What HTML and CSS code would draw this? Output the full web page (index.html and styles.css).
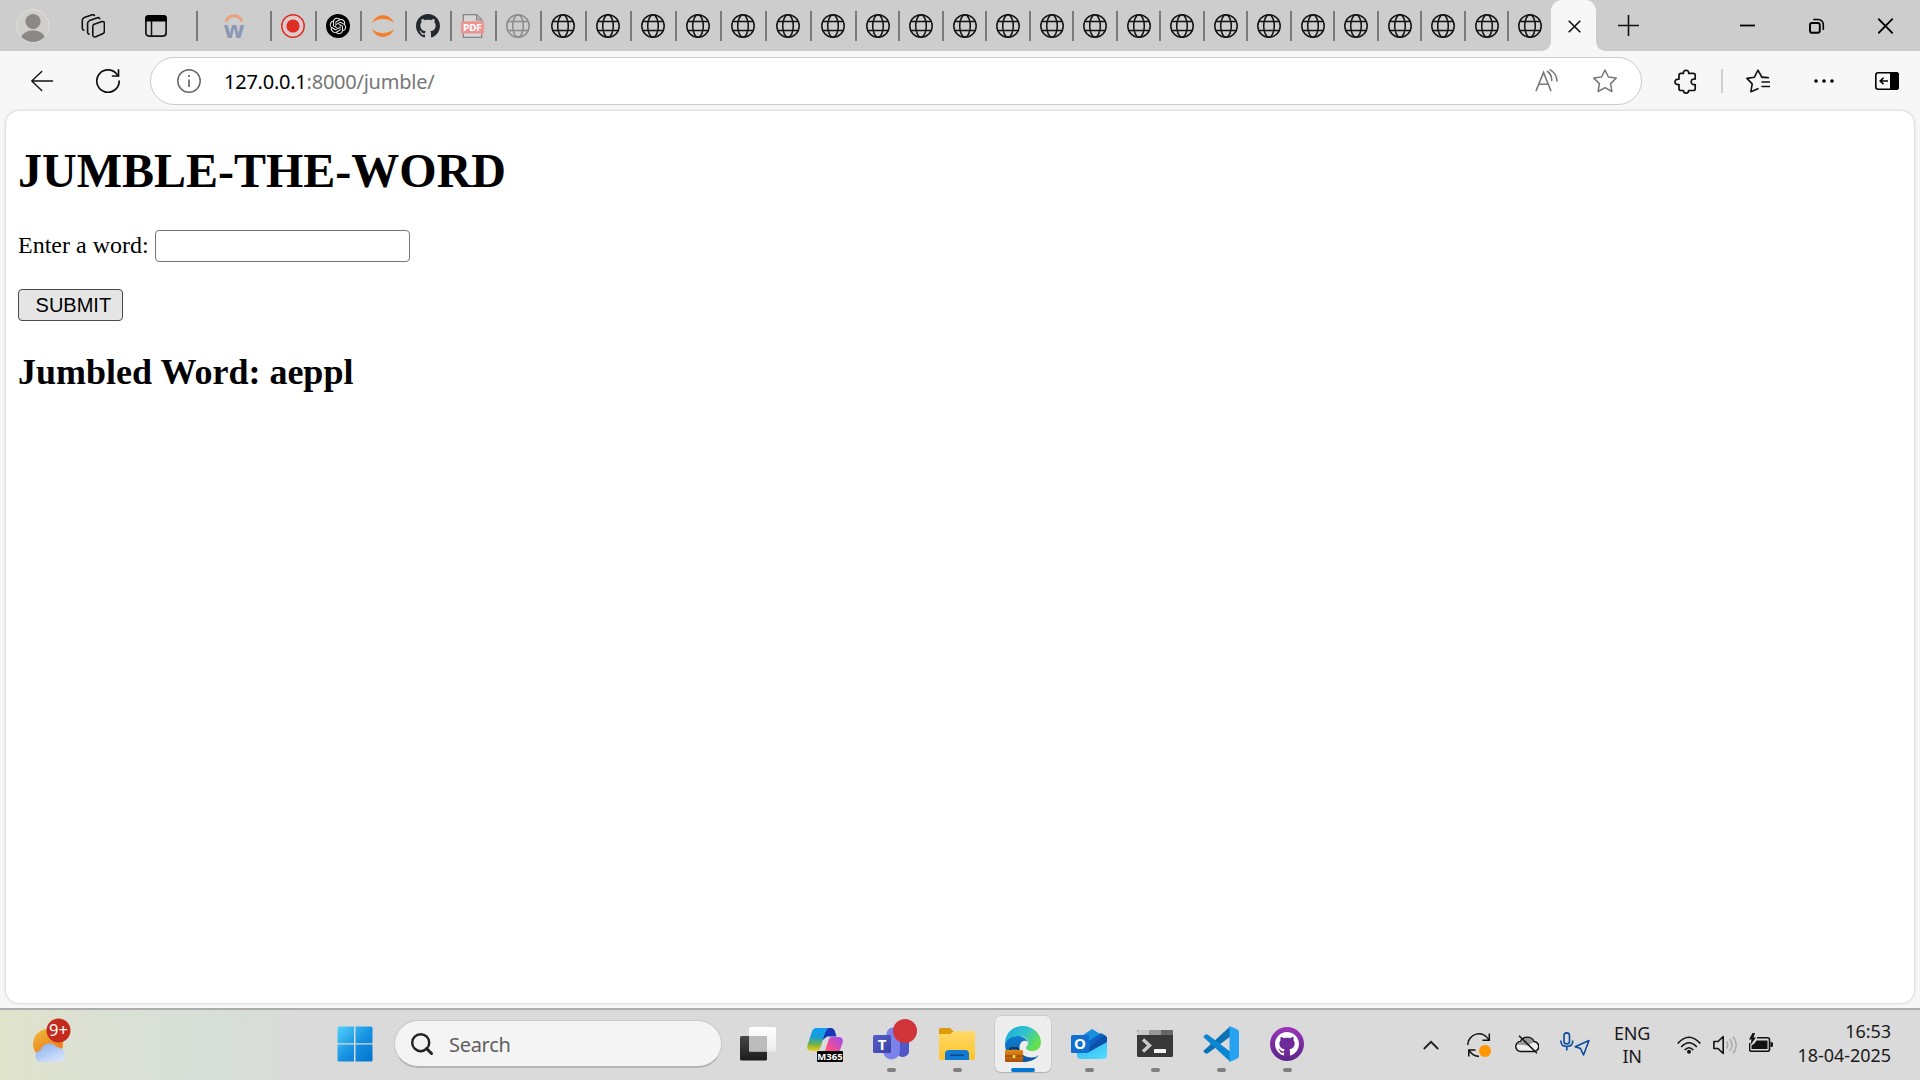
FILE: index.html
```html
<!DOCTYPE html>
<html lang="en">
<head>
<meta charset="utf-8">
<title>127.0.0.1:8000/jumble/</title>
<link rel="stylesheet" href="styles.css">
</head>
<body>
<svg class="defs" aria-hidden="true">
  <defs>
    <symbol id="globe" viewBox="0 0 24 24"><g fill="none" stroke="currentColor" stroke-width="1.5"><circle cx="12" cy="12" r="11.2"/><ellipse cx="12" cy="12" rx="5.3" ry="11.2"/><path d="M1.8 7.6h20.4M1.8 16.4h20.4"/></g></symbol>
    <symbol id="github" viewBox="0 0 16 16"><path fill="currentColor" d="M8 0C3.58 0 0 3.58 0 8c0 3.54 2.29 6.53 5.47 7.59.4.07.55-.17.55-.38 0-.19-.01-.82-.01-1.49-2.01.37-2.53-.49-2.69-.94-.09-.23-.48-.94-.82-1.13-.28-.15-.68-.52-.01-.53.63-.01 1.08.58 1.23.82.72 1.21 1.87.87 2.33.66.07-.52.28-.87.51-1.07-1.78-.2-3.64-.89-3.64-3.95 0-.87.31-1.59.82-2.15-.08-.2-.36-1.02.08-2.12 0 0 .67-.21 2.2.82.64-.18 1.32-.27 2-.27.68 0 1.36.09 2 .27 1.53-1.04 2.2-.82 2.2-.82.44 1.1.16 1.92.08 2.12.51.56.82 1.27.82 2.15 0 3.07-1.87 3.75-3.65 3.95.29.25.54.73.54 1.48 0 1.07-.01 1.93-.01 2.2 0 .21.15.46.55.38A8.01 8.01 0 0 0 16 8c0-4.42-3.58-8-8-8z"/></symbol>
    <linearGradient id="win" x1="0" y1="0" x2="1" y2="1"><stop offset="0" stop-color="#4fd0fb"/><stop offset=".55" stop-color="#1590e0"/><stop offset="1" stop-color="#0273d0"/></linearGradient>
    <linearGradient id="sun" x1="0" y1="0" x2=".6" y2="1"><stop offset="0" stop-color="#edbd3a"/><stop offset="1" stop-color="#f07318"/></linearGradient>
    <linearGradient id="cloud" x1="0" y1="0" x2=".7" y2="1"><stop offset="0" stop-color="#86acee"/><stop offset="1" stop-color="#d5e4fb"/></linearGradient>
    <linearGradient id="dark" x1="0" y1="0" x2="0" y2="1"><stop offset="0" stop-color="#474745"/><stop offset="1" stop-color="#1c1c1b"/></linearGradient>
    <linearGradient id="glass" x1="0" y1="0" x2="0" y2="1"><stop offset="0" stop-color="#fff"/><stop offset="1" stop-color="#ececec"/></linearGradient>
    <linearGradient id="cp1" x1="0" y1="0" x2="0" y2="1"><stop offset="0" stop-color="#119df2"/><stop offset=".4" stop-color="#159ed8"/><stop offset=".7" stop-color="#6fb24b"/><stop offset="1" stop-color="#f5cb12"/></linearGradient>
    <linearGradient id="cp2" x1="0" y1="1" x2="1" y2="0"><stop offset="0" stop-color="#ff9a3c"/><stop offset=".45" stop-color="#fb4f86"/><stop offset="1" stop-color="#9b4cf4"/></linearGradient>
    <linearGradient id="folder" x1="0" y1="0" x2="0" y2="1"><stop offset="0" stop-color="#ffda66"/><stop offset="1" stop-color="#fdc32c"/></linearGradient>
    <linearGradient id="edge1" x1="0" y1="0" x2="1" y2=".5"><stop offset="0" stop-color="#1aa6dd"/><stop offset=".55" stop-color="#2fc3cf"/><stop offset="1" stop-color="#65e04c"/></linearGradient>
    <linearGradient id="edge2" x1="0" y1="0" x2="0" y2="1"><stop offset="0" stop-color="#0f7fd0"/><stop offset="1" stop-color="#0c55a4"/></linearGradient>
    <linearGradient id="brief" x1="0" y1="0" x2="0" y2="1"><stop offset="0" stop-color="#e08a18"/><stop offset="1" stop-color="#a85008"/></linearGradient>
    <linearGradient id="teams" x1="0" y1="0" x2="1" y2="1"><stop offset="0" stop-color="#5560c4"/><stop offset="1" stop-color="#3a41a6"/></linearGradient>
    <linearGradient id="outl" x1="0" y1="0" x2="1" y2="1"><stop offset="0" stop-color="#27b6ee"/><stop offset="1" stop-color="#55ddff"/></linearGradient>
    <linearGradient id="ghd" x1="0" y1="0" x2="0" y2="1"><stop offset="0" stop-color="#9a35b8"/><stop offset="1" stop-color="#5b2688"/></linearGradient>
  </defs>
</svg>

<header class="tabbar">
  <div class="tab-tools">
    <svg class="avatar" viewBox="0 0 34 34"><defs><clipPath id="av"><circle cx="17" cy="17" r="16"/></clipPath></defs><circle cx="17" cy="17" r="16.3" fill="#d0cfcc" stroke="#dfdfdb"/><g fill="#8c8886" clip-path="url(#av)"><circle cx="17" cy="12.5" r="7.6"/><ellipse cx="17" cy="31" rx="12.3" ry="9.8"/></g></svg>
    <svg class="collections" viewBox="0 0 24 24" fill="none" stroke="#111" stroke-width="1.6" stroke-linejoin="round" stroke-linecap="round"><path d="M12.5 10.5 21 7.6q2.4-.5 2.4 1.8v7.8q0 1.9-1.8 2.6l-6.8 3q-3 .8-3-2v-7.900q0-1.700.7-2.400z"/><path d="M18.700 4.700q-.8-1.500-3-.8L8.500 6.600Q6.600 7.500 6.600 9.500v8.800q0 1.500 1.400 1.800"/><path d="M13.500 1.500q-1-1.200-3-.5L3.300 3.500Q1.300 4.300 1.300 6.300v8q0 1.500 1.400 1.800"/></svg>
    <svg class="vtabs" viewBox="0 0 22 22"><rect x=".9" y=".9" width="20.200" height="20.200" rx="3" fill="none" stroke="#111" stroke-width="1.700"/><path d="M0 6.500V3.500A3.500 3.500 0 0 1 3.500 0h15A3.500 3.500 0 0 1 22 3.500v3z"/><path d="M6.500 6v15" stroke="#111" stroke-width="1.500"/></svg>
  </div>
  <nav class="tabs">
    <div class="tab pinned"><svg viewBox="0 0 24 24"><path d="M4 7.500a8.400 8.400 0 0 1 16 0" fill="none" stroke="#e9a27d" stroke-width="3"/><text x="12" y="23.700" text-anchor="middle" class="w-letter">w</text></svg></div>
    <div class="tab"><svg viewBox="0 0 24 24"><circle cx="12" cy="12" r="11.200" fill="#dccccb" stroke="#dd2f26" stroke-width="1.500"/><circle cx="12" cy="12" r="6.600" fill="#dd2f26"/></svg></div>
    <div class="tab"><svg viewBox="0 0 24 24"><circle cx="12" cy="12" r="12"/><path transform="translate(3.700 3.700) scale(.69)" fill="#e4e4e4" d="M22.282 9.821a5.985 5.985 0 0 0-.516-4.911 6.046 6.046 0 0 0-6.510-2.900A6.065 6.065 0 0 0 4.981 4.182a5.985 5.985 0 0 0-3.998 2.900 6.046 6.046 0 0 0 .743 7.097 5.980 5.980 0 0 0 .511 4.911 6.051 6.051 0 0 0 6.515 2.900A5.985 5.985 0 0 0 13.260 24a6.056 6.056 0 0 0 5.772-4.206 5.989 5.989 0 0 0 3.998-2.900 6.056 6.056 0 0 0-.748-7.073zm-9.022 12.608a4.476 4.476 0 0 1-2.876-1.041l.142-.080 4.778-2.758a.795.795 0 0 0 .393-.681v-6.737l2.020 1.169a.071.071 0 0 1 .038.052v5.583a4.504 4.504 0 0 1-4.495 4.494zm-9.661-4.125a4.471 4.471 0 0 1-.535-3.014l.142.085 4.783 2.758a.771.771 0 0 0 .781 0l5.843-3.369v2.332a.080.080 0 0 1-.033.062L9.740 19.950a4.499 4.499 0 0 1-6.141-1.646zM2.341 7.896a4.485 4.485 0 0 1 2.366-1.973V11.600a.766.766 0 0 0 .388.677l5.814 3.354-2.020 1.169a.076.076 0 0 1-.071 0l-4.830-2.787A4.504 4.504 0 0 1 2.341 7.872zm16.596 3.856L13.104 8.364 15.119 7.200a.076.076 0 0 1 .071 0l4.830 2.791a4.494 4.494 0 0 1-.677 8.104v-5.677a.790.790 0 0 0-.407-.667zm2.011-3.023l-.142-.085-4.774-2.782a.776.776 0 0 0-.785 0L9.409 9.230V6.897a.066.066 0 0 1 .028-.062l4.830-2.787a4.499 4.499 0 0 1 6.680 4.660zM8.307 12.863l-2.020-1.164a.080.080 0 0 1-.038-.057V6.074a4.499 4.499 0 0 1 7.376-3.454l-.142.081L8.704 5.459a.795.795 0 0 0-.393.681zm1.098-2.365l2.602-1.500 2.607 1.500v2.999l-2.597 1.500-2.607-1.500Z"/></svg></div>
    <div class="tab"><svg viewBox="0 0 24 24" fill="#f37f2c"><path d="M1 9C5-1.500 19-1.500 23 9 17 3.500 7 3.500 1 9z"/><path d="M1 15c4 10.500 18 10.500 22 0-6 5.500-16 5.500-22 0z"/></svg></div>
    <div class="tab gh"><svg><use href="#github"/></svg></div>
    <div class="tab"><svg viewBox="0 0 24 24"><path d="M2.300 23.400V.600h13.400l5 5v17.800z" fill="#d6d6d6" stroke="#848484" stroke-width="1.200"/><path d="M15.500 .600v5.400h5.300" fill="#b5b5b5" stroke="#848484"/><rect x="0" y="7.300" width="23" height="12.200" rx="1" fill="#ed9493"/><text x="11.500" y="16.600" text-anchor="middle" class="pdf-label">PDF</text></svg></div>
    <div class="tab asleep"><svg><use href="#globe"/></svg></div>
    <div class="tab"><svg><use href="#globe"/></svg></div>
    <div class="tab"><svg><use href="#globe"/></svg></div>
    <div class="tab"><svg><use href="#globe"/></svg></div>
    <div class="tab"><svg><use href="#globe"/></svg></div>
    <div class="tab"><svg><use href="#globe"/></svg></div>
    <div class="tab"><svg><use href="#globe"/></svg></div>
    <div class="tab"><svg><use href="#globe"/></svg></div>
    <div class="tab narrow"><svg><use href="#globe"/></svg></div>
    <div class="tab narrow"><svg><use href="#globe"/></svg></div>
    <div class="tab narrow"><svg><use href="#globe"/></svg></div>
    <div class="tab narrow"><svg><use href="#globe"/></svg></div>
    <div class="tab narrow"><svg><use href="#globe"/></svg></div>
    <div class="tab narrow"><svg><use href="#globe"/></svg></div>
    <div class="tab narrow"><svg><use href="#globe"/></svg></div>
    <div class="tab narrow"><svg><use href="#globe"/></svg></div>
    <div class="tab narrow"><svg><use href="#globe"/></svg></div>
    <div class="tab narrow"><svg><use href="#globe"/></svg></div>
    <div class="tab narrow"><svg><use href="#globe"/></svg></div>
    <div class="tab narrow"><svg><use href="#globe"/></svg></div>
    <div class="tab narrow"><svg><use href="#globe"/></svg></div>
    <div class="tab narrow"><svg><use href="#globe"/></svg></div>
    <div class="tab narrow"><svg><use href="#globe"/></svg></div>
    <div class="tab narrow"><svg><use href="#globe"/></svg></div>
    <div class="tab-active"><svg viewBox="0 0 13 13"><path d="M.7.7l11.600 11.600M12.300.7.700 12.300" stroke="#111" stroke-width="1.600"/></svg></div>
  </nav>
  <svg class="new-tab" viewBox="0 0 21 21"><path d="M10.500 0v21M0 10.500h21" stroke="#111" stroke-width="1.600"/></svg>
  <div class="window-controls">
    <svg viewBox="0 0 16 16"><path d="M0 7.500h15" stroke="#000" stroke-width="1.800"/></svg>
    <svg viewBox="0 0 16 16" fill="none" stroke="#000" stroke-width="1.900"><rect x="1" y="5" width="9.800" height="9.800" rx="2"/><path d="M4.300 1.500h5a5 5 0 0 1 5 5V12" stroke-width="1.600"/></svg>
    <svg viewBox="0 0 16 16"><path d="M.300.700l14.400 14.600M14.700.7.300 15.300" stroke="#000" stroke-width="1.800"/></svg>
  </div>
</header>

<section class="toolbar">
  <svg class="back" viewBox="0 0 24 24" fill="none" stroke="#111" stroke-width="1.500" stroke-linecap="round" stroke-linejoin="round"><path d="M23.500 12H.800M11.700 1.700.800 12l10.900 10.300"/></svg>
  <svg class="reload" viewBox="0 0 24 24" fill="none" stroke="#111" stroke-width="1.700" stroke-linecap="round"><path d="M23.200 12A11.200 11.200 0 1 1 20.500 4.800l1.700 2.200"/><path d="M22.500.900V7h-6"/></svg>
  <div class="address">
    <svg class="info" viewBox="0 0 24 24" fill="none" stroke="#666" stroke-width="1.500"><circle cx="12" cy="12" r="11.200"/><path d="M12 10.500v7.500M12 6v2" stroke-width="1.700"/></svg>
    <div class="url"><b>127.0.0.1</b>:8000/jumble/</div>
    <svg class="read" viewBox="0 0 24 24" fill="none" stroke="#777" stroke-width="1.600" stroke-linecap="round"><path d="M1.200 21.500 8.500 3.500l7.300 18M3.800 15.200h9.500M12.500 2.500q4 2.500 4.300 9M15 .900q6.500 3.300 7 11"/></svg>
    <svg class="star" viewBox="0 0 24 24" fill="none" stroke="#777" stroke-width="1.500" stroke-linejoin="round"><path d="m12 1 3.400 7 7.800 1.100-5.600 5.500 1.300 7.900L12 18.700l-6.900 3.800 1.300-7.900L.800 9.100 8.600 8z"/></svg>
  </div>
  <svg class="puzzle" viewBox="0 0 24 24" fill="none" stroke="#111" stroke-width="1.700" stroke-linejoin="round"><path d="M7 3.800h2.500q-.3-3 2.500-3t2.700 3h4.500q2 0 2 2v3.800q-4-.6-4 2.700t4 2.700v4.200q0 1.800-2 1.800h-4.500q0 2.600-2.700 2.600t-2.500-2.600H7q-2 0-2-1.800V15q-4 .4-4-2.600t4-2.800V5.800q0-2 2-2z"/></svg>
  <i class="divider"></i>
  <svg class="favs" viewBox="0 0 24 24" fill="none" stroke="#111" stroke-width="1.600" stroke-linejoin="round" stroke-linecap="round"><path d="M22.500 8.700 15.700 8 12 1.200 8.400 8.200.900 9.400l5.300 5.500-1.300 7.800 7-3"/><path d="M16 13h7.500M16 17.500h7.500M16 8.500h5"/></svg>
  <svg class="more" viewBox="0 0 20 4"><circle cx="2" cy="2" r="1.800"/><circle cx="10" cy="2" r="1.800"/><circle cx="18" cy="2" r="1.800"/></svg>
  <svg class="sidebar" viewBox="0 0 24 18"><rect x=".8" y=".8" width="22.400" height="16.400" rx="2.500" fill="none" stroke="#000" stroke-width="1.600"/><path d="M15 0h6a3 3 0 0 1 3 3v12a3 3 0 0 1-3 3h-6z"/><path d="M13 9H5.500M8.500 5.700 5.200 9l3.300 3.300" fill="none" stroke="#000" stroke-width="1.600"/></svg>
</section>

<main class="page">
  <h1>JUMBLE-THE-WORD</h1>
  <form>
    <label for="word">Enter a word:</label>
    <input type="text" id="word"><br><br>
    <button type="button">&nbsp;SUBMIT</button>
  </form>
  <h2>Jumbled Word: aeppl</h2>
</main>

<footer class="taskbar">
  <div class="weather">
    <svg viewBox="0 0 40 46"><circle cx="16" cy="26" r="15" fill="url(#sun)"/><path d="M9.500 44a5.800 5.800 0 0 1-1-11.600 9.300 9.300 0 0 1 16.300-3.200A8 8 0 0 1 29 44z" fill="url(#cloud)"/><circle cx="26.500" cy="12.500" r="12" fill="#c42b1c"/><text x="26.500" y="18" text-anchor="middle" class="badge-text">9+</text></svg>
  </div>
  <div class="apps">
    <div class="app"><svg viewBox="0 0 36 36" fill="url(#win)"><path d="M.5 2A1.500 1.500 0 0 1 2 .500h15v16.700H.500zM18.500.500H34A1.500 1.500 0 0 1 35.500 2v15.200h-17zM.500 18.500H17v17H2A1.500 1.500 0 0 1 .500 34zM18.500 18.500h17V34a1.500 1.500 0 0 1-1.500 1.500H18.500z"/></svg></div>
    <div class="search"><svg viewBox="0 0 22 22" fill="none" stroke="#222" stroke-width="2.400" stroke-linecap="round"><circle cx="9.700" cy="9.700" r="8.500"/><path d="m15.500 15.500 5 5" stroke-width="3"/></svg><span>Search</span></div>
    <div class="app"><svg viewBox="0 0 36 36"><rect x="0" y="10" width="27" height="24.500" rx="1.500" fill="url(#dark)"/><rect x="9" y="1" width="27" height="24.500" rx="1.500" fill="url(#glass)"/><path d="M9 10h18v15.500H9z" fill="#bcbcbc"/></svg></div>
    <div class="app"><svg viewBox="0 0 36 36"><path d="M20 2h4q3 0 4 3.500l1.500 5H20l-6 5z" fill="#1736b8"/><path d="M9 2h13q-3 1-4.500 6l-3.500 12q-1.500 5-5 5H5q-6 0-4.500-6L5 5.500Q6 2 9 2z" fill="url(#cp1)"/><path d="M25 11h6q6 0 4.500 6L32 27q-1.500 5-6 5h-9q-5 0-7-6h5q3 0 4-4l2.500-8q1-3 3.500-3z" fill="url(#cp2)"/><rect x="10" y="25" width="26" height="11" rx="1" fill="#080808"/><text x="23" y="33.600" text-anchor="middle" class="m365">M365</text></svg></div>
    <div class="app running"><svg class="teams" viewBox="0 0 46 46"><path d="M25 22h11v14a6.500 6.500 0 0 1-11 3z" fill="#4f57c4"/><circle cx="20" cy="18" r="6.500" fill="#7b83eb"/><path d="M10 21h17v14a8.500 8.500 0 0 1-17 0z" fill="#7b83eb"/><rect x="0" y="19" width="18" height="18" rx="1.500" fill="url(#teams)"/><text x="9" y="33.500" text-anchor="middle" class="tile-letter">T</text><circle cx="32" cy="15" r="12" fill="#d13438"/></svg></div>
    <div class="app running"><svg viewBox="0 0 36 36"><path d="M0 3.500A1.500 1.500 0 0 1 1.500 2H11l4 4-3 3H0z" fill="#dd9a0a"/><path d="M0 8h11l4-3h19.500A1.500 1.500 0 0 1 36 6.500v26a1.500 1.500 0 0 1-1.500 1.500h-33A1.500 1.500 0 0 1 0 32.500z" fill="url(#folder)"/><path d="M6 34v-6a4 4 0 0 1 4-4h16a4 4 0 0 1 4 4v6z" fill="#0f7bd2"/><path d="M11 29.200h14" stroke="#0a4a86" stroke-width="1.600"/></svg></div>
    <div class="app running active"><svg viewBox="0 0 36 36"><path d="M0 18C0 7 8 0 18 0s18 8 18 16c0 6-4 9-8.500 9-4 0-6.500-1.500-6.500-3s2-2 2-5c0-4-4-7-9-7C7 10 1.500 14 0 18z" fill="url(#edge1)"/><path d="M0 18C1.500 13 7 10 12.500 10c5 0 9 2.500 10 5.500-4-2-8 1-8 6 0 6 5.500 10 12 10 3 0 5.500-.8 7.500-2.500C31 33.500 25 36 18 36 8 36 0 28 0 18z" fill="url(#edge2)"/><path d="M5 25v-1.500q0-1.500 1.500-1.500h5q1.500 0 1.500 1.500V25" fill="none" stroke="#222" stroke-width="1.500"/><rect x="0" y="24" width="18" height="12" rx="1" fill="url(#brief)"/><path d="M0 30h18" stroke="#8a4206"/><rect x="7.800" y="29" width="2.500" height="3" fill="#ffd34a"/></svg></div>
    <div class="app running"><svg viewBox="0 0 36 36"><path d="M6 13 21 3l15 9v8l-15 9-15-8z" fill="#1b8fdf"/><path d="M15 22 36 11v7L18 30z" fill="#0a4aa0"/><path d="M18 15 30 7l5 3-18 12z" fill="#0d63c2"/><path d="M6 24 36 15v14a4 4 0 0 1-4 4H10a4 4 0 0 1-4-4z" fill="url(#outl)"/><path d="M13 25 33 9l3 2v5L18 26z" fill="#0b50ab"/><rect x="0" y="9" width="18" height="18" rx="1.500" fill="#1170cf"/><text x="9" y="23.200" text-anchor="middle" class="tile-letter">O</text></svg></div>
    <div class="app running"><svg viewBox="0 0 36 36"><rect y="4" width="36" height="27" rx="1.500" fill="#383838"/><path d="M1.500 4H12v5H0V5.500z" fill="#c8c8c8"/><path d="M12 4h12v5H12z" fill="#989898"/><path d="M24 4h10.500L36 5.500V9H24z" fill="#666"/><path d="m6 13.500 6.500 6L6 25.500" fill="none" stroke="#c9c9c9" stroke-width="3.400"/><rect x="17" y="23" width="12" height="4" rx=".5" fill="#f2f2f2"/></svg></div>
    <div class="app running"><svg viewBox="0 0 36 36"><path d="M.800 24.500 27 .500v10.200L5 27.300q-1.500 1-2.800-.2L.800 26q-.8-.8 0-1.500z" fill="#0b72b8"/><path d="M.800 11.500Q0 10.700.800 10l1.500-1.200q1.200-1 2.700 0L27 25.500V35.500z" fill="#0a86d2"/><path d="M26.500 0 34 3.200q2 1 2 2.800v24q0 1.800-2 2.800L26.500 36z" fill="#27a3f2"/></svg></div>
    <div class="app running ghd"><svg viewBox="0 0 36 36"><circle cx="18" cy="18" r="17" fill="url(#ghd)"/><circle cx="18" cy="18" r="12.200" fill="#6d2a98"/><svg x="6" y="6" width="24" height="24"><use href="#github"/></svg></svg></div>
  </div>
  <div class="tray">
    <svg class="t-chev" viewBox="0 0 16 10"><path d="m.8 9 7.200-7.200L15.200 9" fill="none" stroke="#222" stroke-width="1.900"/></svg>
    <svg class="t-sync" viewBox="0 0 24 24"><g fill="none" stroke="#111" stroke-width="1.500"><path d="M.800 12A11.200 11.200 0 0 1 22 7M22.300.500V7.300H15.500M1.800 23.500V17H8.500M2 17.300q4 6 10 6"/></g><circle cx="18" cy="18" r="6" fill="#ff9500"/></svg>
    <svg class="t-cloud" viewBox="0 0 24 20"><path d="M6 16.500a5 5 0 0 1-.5-10 7.500 7.500 0 0 1 13.500 0 5 5 0 0 1-.5 10z" fill="#eee" stroke="#111" stroke-width="1.500"/><path d="M2 9.500q2-3.500 5-2.500 3-6 8.500-3.500 2.500 1.500 3 4l-6 3z" fill="#999"/><path d="m4 .800 18 17.500" stroke="#111" stroke-width="1.500"/></svg>
    <svg class="t-mic" viewBox="0 0 30 24" fill="none" stroke="#0a4a9f" stroke-width="1.600"><rect x="4" y=".9" width="5.500" height="11" rx="2.700"/><path d="M.800 8.500q0 6 6 6t6-6M6.800 14.500V18.500"/><path d="M29 8.500 23.500 23l-3-6.500-5.300-1.800z" stroke-linejoin="round"/></svg>
    <div class="lang">ENG<br>IN</div>
    <svg class="t-wifi" viewBox="0 0 24 18" fill="none" stroke="#111" stroke-width="1.700"><path d="M.700 7.500q11.300-12.500 22.600 0M4.200 11q7.800-8.500 15.600 0M7.700 14q4.300-4.500 8.600 0"/><circle cx="12" cy="15.700" r="2" fill="#111" stroke="none"/></svg>
    <svg class="t-vol" viewBox="0 0 24 20" fill="none"><path d="M.900 6.500H5L10.200 1.500v17L5 13.500H.900z" stroke="#111" stroke-width="1.600" stroke-linejoin="round"/><path d="M13.500 6.500q2.500 3.500 0 7M16.700 4q4.500 6 0 12M20 1.500q6.500 8.500 0 17" stroke="#aaa" stroke-width="1.500"/></svg>
    <svg class="t-bat" viewBox="0 0 24 20"><path d="M8 4.800h10.500q2 0 2 2v9.500q0 2-2 2h-16q-2 0-2-2V10" fill="none" stroke="#111" stroke-width="1.600"/><path d="M7.500 7.500h11v8.500h-16v-3.500q4-2 5-5zM21.500 9h1a1.500 1.500 0 0 1 1.500 1.500v2a1.500 1.500 0 0 1-1.500 1.500h-1zM3.500 0 0 6.500h2.500L1.500 12 7 4.500H4.500L6 0z" fill="#111"/></svg>
    <div class="clock">16:53<br>18-04-2025</div>
  </div>
</footer>
</body>
</html>
```
FILE: styles.css
```css
* { box-sizing: border-box; }
body {
  margin: 0;
  width: 1920px;
  height: 1080px;
  overflow: hidden;
  display: flex;
  flex-direction: column;
  background: #f7f7f7;
  font-family: "Noto Sans", "Open Sans", sans-serif;
}
svg { display: block; flex: none; }
.defs { width: 0; height: 0; position: absolute; }

/* Tab strip */
.tabbar {
  height: 51px;
  flex: none;
  display: flex;
  align-items: center;
  background: #cdcdcd;
}
.tab-tools { display: flex; align-items: center; width: 196px; padding-left: 16px; }
.avatar { width: 34px; height: 34px; }
.collections { width: 24px; height: 24px; margin-left: 31px; }
.vtabs { width: 22px; height: 22px; margin-left: 40px; }
.tabs { display: flex; align-items: center; height: 51px; }
.tab {
  width: 45px;
  height: 30px;
  margin-top: 1px;
  padding-left: 9px;
  border-left: 2px solid #7a7a7a;
  display: flex;
  align-items: center;
  color: #111;
}
.tab svg { width: 24px; height: 24px; overflow: visible; }
.tab.pinned { width: 74px; padding-left: 24px; }
.tab.narrow { width: 43px; }
.tab.narrow:nth-child(even) { width: 44px; }
.tab.gh { color: #24292f; }
.tab.asleep { color: #8b8b8b; }
.w-letter { font: 700 24px "Open Sans", sans-serif; fill: #8b97b3; }
.pdf-label { font: 700 8.500px "DejaVu Sans", sans-serif; fill: #fff; }
.tab-active {
  position: relative;
  width: 45px;
  height: 51px;
  display: flex;
  align-items: center;
  justify-content: center;
  background: #f7f7f7;
  border-radius: 11px 11px 0 0;
}
.tab-active svg { width: 13px; height: 13px; margin: 1px 0 0 1px; }
.tab-active::before, .tab-active::after {
  content: "";
  position: absolute;
  bottom: 0;
  width: 9px;
  height: 9px;
}
.tab-active::before { left: -9px; background: radial-gradient(circle at 0 0, transparent 8.500px, #f7f7f7 9px); }
.tab-active::after { right: -9px; background: radial-gradient(circle at 100% 0, transparent 8.500px, #f7f7f7 9px); }
.new-tab { width: 21px; height: 21px; margin: 0 auto 1px 22px; }
.window-controls { display: flex; gap: 53px; padding-right: 26px; }
.window-controls svg { width: 16px; height: 16px; }

/* Toolbar */
.toolbar { height: 60px; flex: none; display: flex; align-items: center; }
.back { width: 24px; height: 22px; margin: 0 0 1px 30px; }
.reload { width: 24px; height: 24px; margin-left: 42px; }
.address {
  width: 1492px;
  height: 48px;
  margin-left: 30px;
  padding: 0 24px 0 26px;
  display: flex;
  align-items: center;
  background: #fff;
  border: 1px solid #cbcbcb;
  border-radius: 24px;
}
.info { width: 24px; height: 24px; }
.url { flex: 1; margin: 0 0 0 23px; font-size: 20px; letter-spacing: -.24px; color: #767676; }
.url b { font-weight: 400; color: #000; }
.read { width: 24px; height: 24px; margin-right: 34px; }
.star { width: 24px; height: 24px; }
.puzzle { width: 24px; height: 25px; margin-left: 32px; }
.divider { width: 2px; height: 24px; margin-left: 23px; background: #cfcfcf; }
.favs { width: 24px; height: 24px; margin-left: 23px; }
.more { width: 20px; height: 4px; margin-left: 44px; }
.sidebar { width: 24px; height: 18px; margin-left: 41px; }

/* Web page */
.page {
  flex: 1;
  margin: 0 6px 5px;
  padding: 0 12px;
  background: #fff;
  border-radius: 13px;
  box-shadow: 0 0 3px rgba(0, 0, 0, .25);
  font: 24px "Liberation Serif", serif;
  color: #000;
}
.page h1 { margin: 32px 0; font-size: 48px; line-height: 55px; }
.page h2 { margin: 31px 0; font-size: 36px; line-height: 41px; }
.page form { line-height: 27px; }
.page input {
  width: 247px;
  min-width: 255px;
  height: 32px;
  margin: 0;
  padding: 2px 3px;
  border: 1px solid #767676;
  border-radius: 4px;
  font: 20px "Liberation Sans", sans-serif;
}
.page button {
  height: 32px;
  margin: 0;
  padding: 2px 11px 1px;
  border: 1px solid #4a4a4a;
  border-radius: 4px;
  background: #e5e5e5;
  font: 20px "Liberation Sans", sans-serif;
  color: #000;
}

/* Taskbar */
.taskbar {
  height: 72px;
  flex: none;
  display: flex;
  border-top: 2px solid #acacac;
  background: linear-gradient(90deg, #dfe3cb 0, #dbe0d4 100px, #d7dfd8 200px, #dadada 300px, #dadada 100%);
}
.weather { width: 327px; padding: 8px 0 0 32px; }
.weather svg { width: 40px; height: 46px; }
.badge-text { font: 16.500px "Noto Sans", sans-serif; fill: #fff; }
.apps { display: flex; gap: 10px; align-items: flex-start; padding-top: 6px; }
.app {
  width: 56px;
  height: 56px;
  display: flex;
  flex-direction: column;
  align-items: center;
  padding-top: 10px;
  border-radius: 6px;
}
.app svg { width: 36px; height: 36px; }
.app .teams { width: 46px; height: 46px; margin: -10px -10px 0 0; }
.app.running::after {
  content: "";
  width: 9px;
  height: 5px;
  margin-top: 6px;
  border-radius: 3px;
  background: #808080;
}
.app.active { background: #ededed; box-shadow: 0 0 0 1px rgba(0, 0, 0, .05), 0 1px 1px rgba(0, 0, 0, .15); }
.app.active::after { width: 24px; background: #0078d4; }
.app.ghd svg { color: #fff; }
.app.ghd svg svg { width: 24px; height: 24px; }
.m365 { font: 700 9.500px "Open Sans", sans-serif; fill: #fff; }
.tile-letter { font: 700 15px "Open Sans", sans-serif; fill: #fff; }
.search {
  width: 328px;
  height: 48px;
  margin: 4px 0 0 1px;
  padding-left: 16px;
  display: flex;
  align-items: center;
  gap: 16px;
  background: #f4f4f4;
  border: 1px solid #c8c8c8;
  border-bottom: 2px solid #b5b5b5;
  border-radius: 24px;
  font-size: 20px;
  color: #606060;
}
.search + .app { margin-left: -2px; }
.search + .app + .app { margin-left: 1px; }
.search svg { width: 22px; height: 22px; }
.search span { padding-top: 1px; letter-spacing: -.3px; }
.tray { flex: 1; display: flex; justify-content: flex-end; align-items: center; padding-right: 29px; color: #1a1a1a; font-size: 18px; line-height: 24px; }
.t-chev { width: 16px; height: 10px; }
.t-sync { width: 24px; height: 24px; margin-left: 28px; }
.t-cloud { width: 24px; height: 20px; margin-left: 24px; }
.t-mic { width: 30px; height: 24px; margin: 0 0 3px 21px; }
.lang { width: 60px; margin-left: 12px; text-align: center; letter-spacing: -.3px; line-height: 23px; }
.t-wifi { width: 24px; height: 18px; margin: 0 0 1px 15px; }
.t-vol { width: 24px; height: 20px; margin-left: 12px; }
.t-bat { width: 24px; height: 20px; margin: 0 0 4px 12px; }
.clock { width: 118px; padding-bottom: 4px; text-align: right; letter-spacing: -.05px; }
```
